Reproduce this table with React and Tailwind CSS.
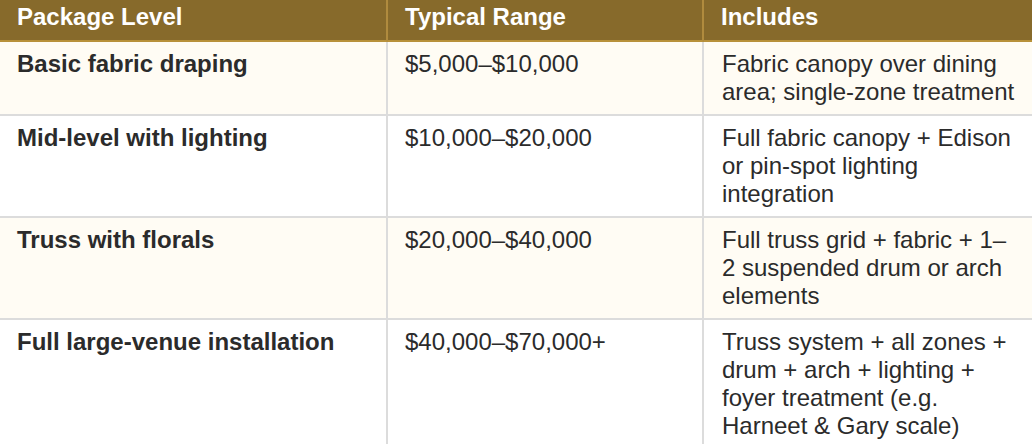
const rows = [
  {
    level: "Basic fabric draping",
    range: "$5,000–$10,000",
    includes: "Fabric canopy over dining area; single-zone treatment",
  },
  {
    level: "Mid-level with lighting",
    range: "$10,000–$20,000",
    includes: "Full fabric canopy + Edison or pin-spot lighting integration",
  },
  {
    level: "Truss with florals",
    range: "$20,000–$40,000",
    includes: "Full truss grid + fabric + 1–2 suspended drum or arch elements",
  },
  {
    level: "Full large-venue installation",
    range: "$40,000–$70,000+",
    includes:
      "Truss system + all zones + drum + arch + lighting + foyer treatment (e.g. Harneet & Gary scale)",
  },
];

export default function App() {
  return (
    <div className="w-[1032px] h-[444px] overflow-hidden bg-white font-['Liberation_Sans',Arial,sans-serif] text-[24px] leading-[28px]">
      <table className="w-full table-fixed border-separate border-spacing-0">
        <colgroup>
          <col className="w-[388px]" />
          <col className="w-[316px]" />
          <col />
        </colgroup>
        <thead>
          <tr className="bg-[#876a2b] text-white font-bold text-left">
            <th className="pt-[3px] pb-[9px] px-[17px] border-r-2 border-b-2 border-r-[#b08b3e] border-b-[#b8913a]">
              Package Level
            </th>
            <th className="pt-[3px] pb-[9px] px-[17px] border-r-2 border-b-2 border-r-[#b08b3e] border-b-[#b8913a]">
              Typical Range
            </th>
            <th className="pt-[3px] pb-[9px] px-[17px] border-b-2 border-b-[#b8913a]">
              Includes
            </th>
          </tr>
        </thead>
        <tbody className="text-[#2b2b2b]">
          {rows.map((r, i) => (
            <tr key={r.level} className={i % 2 === 0 ? "bg-[#fffcf4]" : "bg-white"}>
              <td className="align-top py-2 px-[17px] font-bold border-r-2 border-b-2 border-[#dcdcdc]">
                {r.level}
              </td>
              <td className="align-top py-2 px-[17px] border-r-2 border-b-2 border-[#dcdcdc]">
                {r.range}
              </td>
              <td className="align-top py-2 pl-[18px] pr-[16px] border-b-2 border-[#dcdcdc]">
                {r.includes}
              </td>
            </tr>
          ))}
        </tbody>
      </table>
    </div>
  );
}
